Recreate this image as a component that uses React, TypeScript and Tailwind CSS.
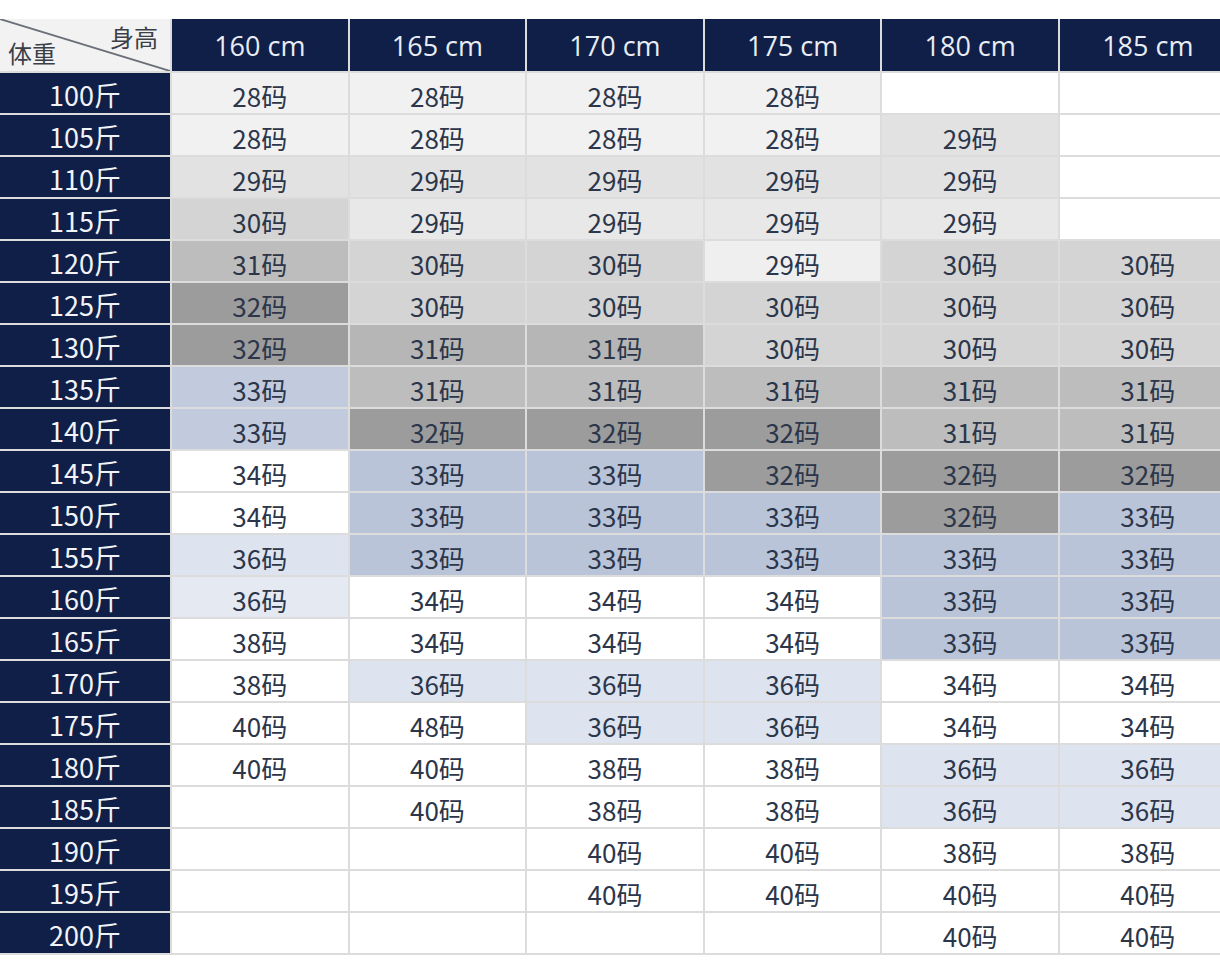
import { Fragment } from 'react';

const heights = ['160 cm', '165 cm', '170 cm', '175 cm', '180 cm', '185 cm'];

// each cell: size code, or '' for empty; suffix letters pick a lighter/darker shade
const rows: [string, string[]][] = [
  ['100斤', ['28', '28', '28', '28', '', '']],
  ['105斤', ['28', '28', '28', '28', '29d', '']],
  ['110斤', ['29d', '29d', '29d', '29d', '29d', '']],
  ['115斤', ['30', '29', '29', '29', '29', '']],
  ['120斤', ['31', '30', '30', '29l', '30', '30']],
  ['125斤', ['32', '30', '30', '30', '30', '30']],
  ['130斤', ['32', '31d', '31d', '30', '30', '30']],
  ['135斤', ['33l', '31', '31', '31', '31', '31']],
  ['140斤', ['33l', '32', '32', '32', '31', '31']],
  ['145斤', ['34', '33', '33', '32', '32', '32']],
  ['150斤', ['34', '33', '33', '33', '32', '33']],
  ['155斤', ['36', '33', '33', '33', '33', '33']],
  ['160斤', ['36l', '34', '34', '34', '33', '33']],
  ['165斤', ['38', '34', '34', '34', '33', '33']],
  ['170斤', ['38', '36', '36', '36', '34', '34']],
  ['175斤', ['40', '48', '36', '36', '34', '34']],
  ['180斤', ['40', '40', '38', '38', '36', '36']],
  ['185斤', ['', '40', '38', '38', '36', '36']],
  ['190斤', ['', '', '40', '40', '38', '38']],
  ['195斤', ['', '', '40', '40', '40', '40']],
  ['200斤', ['', '', '', '', '40', '40']],
];

const shade: Record<string, string> = {
  '28': 'bg-[#f1f1f1]',
  '29': 'bg-[#e8e8e8]',
  '29d': 'bg-[#e2e2e2]',
  '29l': 'bg-[#efefef]',
  '30': 'bg-[#d4d4d4]',
  '31': 'bg-[#bdbdbd]',
  '31d': 'bg-[#b6b6b6]',
  '32': 'bg-[#9c9c9c]',
  '33': 'bg-[#b9c4d9]',
  '33l': 'bg-[#c2cbdd]',
  '36': 'bg-[#dde4ef]',
  '36l': 'bg-[#e4e9f2]',
};

function Cell({ code }: { code: string }) {
  const num = code.replace(/[a-z]/g, '');
  const bg = shade[code] ?? 'bg-white';
  return (
    <div className={`${bg} flex items-center justify-center pt-[4px] text-[26px] text-[#2c364a]`}>
      {num && `${num}码`}
    </div>
  );
}

function Corner() {
  return (
    <div className="relative bg-[#f2f2f2] text-[24px] text-[#3b3f47]">
      <svg className="absolute inset-0" width="170" height="52" viewBox="0 0 170 52">
        <line x1="0" y1="0" x2="170" y2="52" stroke="#6b6f78" strokeWidth="1.8" />
      </svg>
      <span className="absolute right-[12px] top-[0px]">身高</span>
      <span className="absolute left-[8px] bottom-[0px]">体重</span>
    </div>
  );
}

export default function App() {
  return (
    <div className="w-[1220px] h-[978px] overflow-hidden bg-white pt-[19px] font-['Noto_Sans_CJK_SC',sans-serif]">
      <div className="grid grid-cols-[170px_repeat(6,175.6px)] grid-rows-[52px_repeat(21,40px)] gap-[2px] pb-[2px] bg-[#dcdcdc] w-max">
        <Corner />
        {heights.map((h) => (
          <div
            key={h}
            className="bg-[#0f1f48] flex items-center justify-center pt-[3px] text-[27px] text-[#e9ecf2] font-['Open_Sans','Noto_Sans_CJK_SC',sans-serif]"
          >
            {h}
          </div>
        ))}
        {rows.map(([w, cells]) => (
          <Fragment key={w}>
            <div className="bg-[#0f1f48] flex items-center justify-center pt-[4px] text-[27px] text-[#f1f3f7]">
              {w}
            </div>
            {cells.map((c, i) => (
              <Cell key={w + i} code={c} />
            ))}
          </Fragment>
        ))}
      </div>
    </div>
  );
}
